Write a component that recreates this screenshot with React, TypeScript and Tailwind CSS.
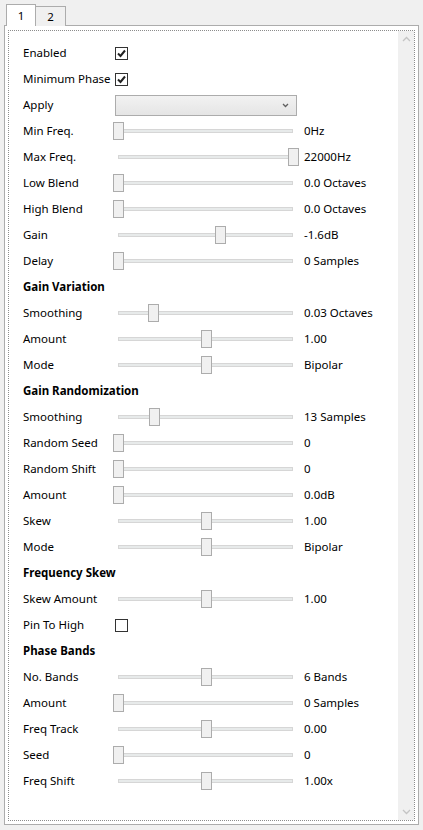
type Row =
  | { kind: "check"; label: string; checked: boolean }
  | { kind: "select"; label: string }
  | { kind: "slider"; label: string; pos: number; value: string }
  | { kind: "header"; label: string };

const rows: Row[] = [
  { kind: "check", label: "Enabled", checked: true },
  { kind: "check", label: "Minimum Phase", checked: true },
  { kind: "select", label: "Apply" },
  { kind: "slider", label: "Min Freq.", pos: 0, value: "0Hz" },
  { kind: "slider", label: "Max Freq.", pos: 175, value: "22000Hz" },
  { kind: "slider", label: "Low Blend", pos: 0, value: "0.0 Octaves" },
  { kind: "slider", label: "High Blend", pos: 0, value: "0.0 Octaves" },
  { kind: "slider", label: "Gain", pos: 102, value: "-1.6dB" },
  { kind: "slider", label: "Delay", pos: 0, value: "0 Samples" },
  { kind: "header", label: "Gain Variation" },
  { kind: "slider", label: "Smoothing", pos: 35, value: "0.03 Octaves" },
  { kind: "slider", label: "Amount", pos: 88, value: "1.00" },
  { kind: "slider", label: "Mode", pos: 88, value: "Bipolar" },
  { kind: "header", label: "Gain Randomization" },
  { kind: "slider", label: "Smoothing", pos: 36, value: "13 Samples" },
  { kind: "slider", label: "Random Seed", pos: 0, value: "0" },
  { kind: "slider", label: "Random Shift", pos: 0, value: "0" },
  { kind: "slider", label: "Amount", pos: 0, value: "0.0dB" },
  { kind: "slider", label: "Skew", pos: 88, value: "1.00" },
  { kind: "slider", label: "Mode", pos: 88, value: "Bipolar" },
  { kind: "header", label: "Frequency Skew" },
  { kind: "slider", label: "Skew Amount", pos: 88, value: "1.00" },
  { kind: "check", label: "Pin To High", checked: false },
  { kind: "header", label: "Phase Bands" },
  { kind: "slider", label: "No. Bands", pos: 88, value: "6 Bands" },
  { kind: "slider", label: "Amount", pos: 0, value: "0 Samples" },
  { kind: "slider", label: "Freq Track", pos: 88, value: "0.00" },
  { kind: "slider", label: "Seed", pos: 0, value: "0" },
  { kind: "slider", label: "Freq Shift", pos: 88, value: "1.00x" },
];

function CheckBox({ checked }: { checked: boolean }) {
  return (
    <div className="ml-[2px] w-[13px] h-[13px] border border-[#333333] bg-white flex items-center justify-center">
      {checked && (
        <svg width="11" height="11" viewBox="0 0 11 11">
          <path d="M2 5.5 L4.5 8 L9 2.5" fill="none" stroke="#222" strokeWidth="2" />
        </svg>
      )}
    </div>
  );
}

function Slider({ pos }: { pos: number }) {
  return (
    <div className="relative w-[186px] h-full">
      <div className="absolute left-[5px] right-[6px] top-[11px] h-[4px] bg-[#e7eaea] border border-[#d6d6d6]" />
      <div
        className="absolute top-[4px] w-[11px] h-[18px] bg-[#f0f0f0] border border-[#acacac]"
        style={{ left: pos }}
      />
    </div>
  );
}

export default function App() {
  return (
    <div className="w-[423px] h-[830px] bg-[#f0f0f0] font-['Noto_Sans',sans-serif] text-[11.5px] text-black overflow-hidden">
      {/* tabs */}
      <div className="flex items-end pl-[6px] pt-[4px] h-[26px]">
        <div className="relative z-10 w-[30px] h-[22px] pt-[1px] border border-b-0 border-[#acacac] bg-white flex items-center justify-center">
          1
        </div>
        <div className="w-[30px] h-[20px] pt-[1px] border border-b-0 border-l-0 border-[#acacac] bg-[#f0f0f0] flex items-center justify-center">
          2
        </div>
      </div>

      <div className="mx-[4px] -mt-[1px] h-[800px] border border-[#acacac] bg-white pt-[4px] px-[3px] pb-[3px]">
        <div className="h-full border border-dotted border-[#8c8c8c] flex">
          <div className="flex-1 pl-[14px] pt-[9px]">
            {rows.map((r, i) => (
              <div key={i} className="flex items-center h-[26px]">
                <div className={`w-[90px] whitespace-nowrap ${r.kind === "header" ? "font-bold" : ""}`}>
                  {r.label}
                </div>
                {r.kind === "check" && <CheckBox checked={r.checked} />}
                {r.kind === "select" && (
                  <div className="ml-[2px] w-[182px] h-[21px] border border-[#acacac] bg-gradient-to-b from-[#f2f2f2] to-[#e5e5e5] flex items-center justify-end pr-[7px]">
                    <svg width="7" height="5" viewBox="0 0 7 5">
                      <path d="M1 1 L3.5 3.5 L6 1" fill="none" stroke="#606060" strokeWidth="1.3" />
                    </svg>
                  </div>
                )}
                {r.kind === "slider" && (
                  <>
                    <Slider pos={r.pos} />
                    <div className="ml-[5px] whitespace-nowrap">{r.value}</div>
                  </>
                )}
              </div>
            ))}
          </div>
          <div className="w-[16px] bg-[#f0f0f0] flex flex-col items-center justify-between py-[5px]">
            <svg width="9" height="6" viewBox="0 0 9 6">
              <path d="M1 5 L4.5 1.5 L8 5" fill="none" stroke="#c4c4c4" strokeWidth="1.3" />
            </svg>
            <svg width="9" height="6" viewBox="0 0 9 6">
              <path d="M1 1 L4.5 4.5 L8 1" fill="none" stroke="#c4c4c4" strokeWidth="1.3" />
            </svg>
          </div>
        </div>
      </div>
    </div>
  );
}
